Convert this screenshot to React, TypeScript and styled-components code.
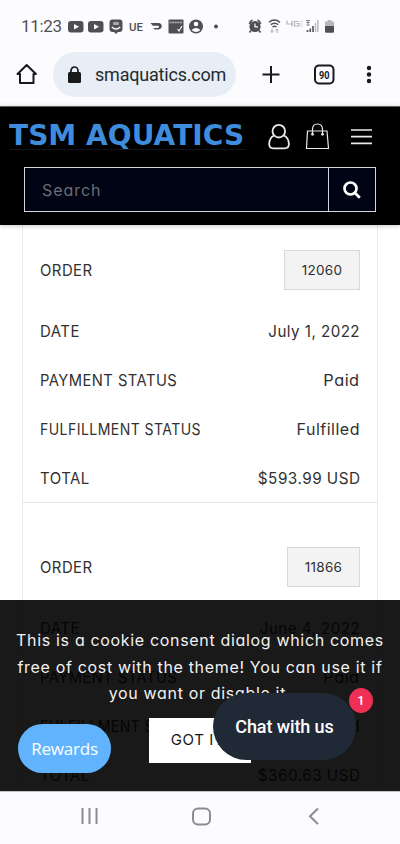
import React from 'react';
import styled, { createGlobalStyle } from 'styled-components';

const Global = createGlobalStyle`
  * { box-sizing: border-box; }
  body { margin: 0; background: #fff; }
  button { font: inherit; padding: 0; border: 0; background: none; }
`;

const Screen = styled.div`
  width: 400px;
  height: 844px;
  display: flex;
  flex-direction: column;
  overflow: hidden;
  background: #fff;
  color: #303030;
  font-family: Inter, 'Open Sans', sans-serif;
  font-feature-settings: 'cv11' 1, 'calt' 0;
`;

const StatusBar = styled.div`
  height: 48px;
  flex: none;
  display: flex;
  background: #fcfcff;
  svg { display: block; }
`;

const Clock = styled.span`
  width: 46px;
  margin: 16px 0 0 21px;
  font: 17px/20px Roboto, sans-serif;
  letter-spacing: -0.35px;
  color: #505053;
  white-space: nowrap;
`;

const BrowserBar = styled.div`
  height: 58px;
  flex: none;
  display: flex;
  align-items: flex-start;
  background: #fcfcff;
`;

const HomeButton = styled.button`
  width: 24px;
  height: 24px;
  margin: 14px 0 0 15px;
`;

const AddressPill = styled.div`
  width: 183px;
  height: 45px;
  margin: 4px 0 0 14px;
  padding-left: 15px;
  display: flex;
  align-items: center;
  gap: 14px;
  border-radius: 23px;
  background: #e7eef5;
  color: #242a30;
  font: 18px/22px Roboto, sans-serif;
  letter-spacing: -0.2px;
`;

const BrowserActions = styled.div`
  margin: 9px 0 0 19px;
`;

const Header = styled.header`
  height: 119px;
  flex: none;
  background: #000;
  position: relative;
  z-index: 1;
  border-top: 1px solid #5c5e60;
  box-shadow: 0 1px 5px rgba(0, 0, 0, 0.22);
`;

const Brand = styled.div`
  height: 60px;
  padding-left: 9px;
  display: flex;
  svg { flex: none; }
`;

const Logo = styled.div`
  width: 237px;
  height: 33px;
  margin: 10px 20px 0 0;
  border-bottom: 1px solid #141414;
`;

const Wordmark = styled.span`
  display: inline-block;
  font: bold 28.8px/37px 'DejaVu Sans', sans-serif;
  color: #3f8cdd;
  white-space: nowrap;
  transform: scaleX(0.975);
  transform-origin: left;
`;

const SearchBox = styled.div`
  width: 352px;
  height: 45px;
  margin-left: 24px;
  display: flex;
  border: 1px solid #d5d6da;
  background: #000313;
`;

const SearchInput = styled.div`
  flex: 1;
  padding-left: 17px;
  font-size: 16px;
  line-height: 44px;
  letter-spacing: 0.95px;
  color: #6c6c72;
`;

const SearchButton = styled.button`
  width: 47px;
  && { border-left: 1px solid #d5d6da; }
  display: flex;
  align-items: center;
  justify-content: center;
`;

const Content = styled.main`
  position: relative;
  flex: 1;
  overflow: hidden;
`;

const Orders = styled.div`
  width: 356px;
  height: 600px;
  margin-left: 22px;
  border: solid #ebebeb;
  border-width: 0 1px;
`;

const Card = styled.section<{ $top: number }>`
  padding: ${(p) => p.$top}px 17px 0;
  border-bottom: 1px solid #e6e6e6;
`;

const Row = styled.div<{ $first?: boolean }>`
  height: ${(p) => (p.$first ? 40 : 48.75)}px;
  margin-bottom: ${(p) => (p.$first ? 17 : 0)}px;
  display: flex;
  align-items: center;
  justify-content: space-between;
  font-size: 16px;
  line-height: 24px;
  letter-spacing: 0.5px;
`;

const Label = styled.span<{ $scale: number }>`
  transform: scaleX(${(p) => p.$scale});
  transform-origin: left;
`;

const Value = styled.span<{ $scale: number }>`
  transform: scaleX(${(p) => p.$scale});
  transform-origin: right;
`;

const OrderLink = styled.button<{ $width: number }>`
  && {
    width: ${(p) => p.$width}px;
    height: 40px;
    border: 1px solid #d9d9d9;
    background: #f3f3f3;
    color: #303030;
    font-size: 13.5px;
    letter-spacing: 0.3px;
  }
`;

const Consent = styled.div`
  position: absolute;
  left: 0;
  right: 0;
  bottom: 0;
  height: 191px;
  padding-top: 27px;
  display: flex;
  flex-direction: column;
  align-items: center;
  background: rgba(0, 0, 0, 0.9);
  color: #f2f2f2;
  font-size: 16px;
  line-height: 26.7px;
  letter-spacing: 0.67px;
  white-space: nowrap;
`;

const GotIt = styled.button`
  && {
    width: 102px;
    height: 45px;
    margin-top: 11px;
    background: #fff;
    color: #161616;
    font-size: 15px;
    letter-spacing: 0.6px;
  }
`;

const Rewards = styled.button`
  && {
    position: absolute;
    left: 18px;
    bottom: 18px;
    width: 93px;
    height: 49px;
    border-radius: 25px;
    background: #62b3fd;
    color: #fff;
    font: 17px/49px 'Open Sans', sans-serif;
    letter-spacing: -0.2px;
  }
`;

const Chat = styled.button`
  && {
    position: absolute;
    left: 213px;
    bottom: 31px;
    width: 143px;
    height: 67px;
    border-radius: 34px;
    background: #202a36;
    color: #fff;
    font: 500 18px/67px Roboto, sans-serif;
    letter-spacing: -0.1px;
  }
`;

const Badge = styled.span`
  position: absolute;
  left: 349px;
  bottom: 78px;
  width: 24px;
  height: 25px;
  border-radius: 50%;
  background: #ef2f55;
  color: #fff;
  font: 500 13px/25px Roboto, sans-serif;
  text-align: center;
`;

const NavBar = styled.nav`
  height: 53px;
  flex: none;
  display: flex;
  justify-content: center;
  background: #fcfcff;
  border-top: 1px solid #c5c5c8;
`;

const StatusIcons = () => (
  <svg width="333" height="48" viewBox="67 0 333 48" fill="#505053">
    <rect x="68" y="21" width="15.5" height="11.5" rx="3" />
    <path d="M74 24l5 2.700-5 2.700z" fill="#fcfcff" />
    <rect x="88" y="21" width="15.5" height="11.500" rx="3" />
    <path d="M94 24l5 2.700-5 2.700z" fill="#fcfcff" />
    <path d="M112.500 19.500h7q3 0 3 3v6.500q0 3-3 3h-1.500l-2 2-2-2h-1.500q-3 0-3-3v-6.500q0-3 3-3z" />
    <path d="M111.800 27q4.200 4 8.400 0" stroke="#fcfcff" strokeWidth="1.200" fill="none" />
    <rect x="113" y="22" width="6" height="3" rx="1" fill="#a9a9ac" />
    <text x="129" y="30.500" fontSize="11" fontFamily="Roboto" fontWeight="500" textLength="14" lengthAdjust="spacingAndGlyphs">UE</text>
    <path d="M150.500 23h8q3.300.3 3.300 3.500-.5 3-4 3h-3l-1.700-1.500h4.400q1.500 0 1.500-1.200 0-1-1.200-1h-5z" />
    <rect x="168.500" y="19.500" width="15" height="14" rx="1" />
    <path d="M169.500 22.500h13" stroke="#b5b5b8" strokeWidth="1.500" strokeDasharray="2 .6" />
    <path d="M177.500 29l1.500 2 3-5" stroke="#fff" strokeWidth="1.100" fill="none" />
    <circle cx="196" cy="26.500" r="7" />
    <circle cx="196" cy="24" r="2.300" fill="#fcfcff" />
    <path d="M191.500 30q4.500-4 9 0-4.500 4-9 0z" fill="#fcfcff" />
    <circle cx="216" cy="26.500" r="2" />
    <circle cx="255" cy="26.500" r="5.600" />
    <path d="M249.500 24q.5-3 3-4M260.500 24q-.5-3-3-4M251 30.500l-1.500 2M259 30.500l1.500 2" stroke="#505053" strokeWidth="1.700" fill="none" />
    <path d="M255 23.500v3.300h3" stroke="#fcfcff" strokeWidth="1.200" fill="none" />
    <path d="M269 22.300q5.300-4.500 11 0M270.800 24.700q3.800-3 7.400 0M272.500 27q2-1.500 4 0" stroke="#505053" strokeWidth="1.500" fill="none" />
    <path d="M272 28.500v4m-1.500-1.500l1.500 1.500 1.500-1.500M277 33v-4m-1.500 1.500L277 29l1.500 1.500" stroke="#aaa" strokeWidth="1" fill="none" />
    <path d="M287 20.500v3.500h6M292 20.500v6M299 21.500h-4.500v4.500h4.500v-2.500h-2.500" stroke="#b5b5b8" strokeWidth="1.200" fill="none" />
    <path d="M300.500 21.500h2M300.500 24h2M300.500 26h2" stroke="#c8c8ca" />
    <path d="M306 20.500h4M306.500 22.500h3M306.500 25h3M308 20v5" stroke="#808083" />
    <path d="M307.500 32v-2M310.300 32v-3.500M313 32v-6" stroke="#505053" strokeWidth="1.600" />
    <path d="M315.500 32V23M317.800 32V20" stroke="#bcbcbf" strokeWidth="1.500" />
    <path d="M325 26v-4.500h2.500V20h4v1.500h2.500V26z" fill="#b9b9bc" />
    <path d="M325 26h9v5.500q0 1.200-1.200 1.200h-6.600q-1.200 0-1.200-1.200z" />
  </svg>
);

type Field = { label: string; scale: number; value: string; valueScale: number };
type Order = { id: string; box: number; top: number; fields: Field[] };

const fields = (date: string, total: string): Field[] => [
  { label: 'DATE', scale: 0.935, value: date, valueScale: 0.945 },
  { label: 'PAYMENT STATUS', scale: 0.92, value: 'Paid', valueScale: 1.02 },
  { label: 'FULFILLMENT STATUS', scale: 0.877, value: 'Fulfilled', valueScale: 1 },
  { label: 'TOTAL', scale: 0.935, value: total, valueScale: 0.955 },
];

const orders: Order[] = [
  { id: '12060', box: 76, top: 25, fields: fields('July 1, 2022', '$593.99 USD') },
  { id: '11866', box: 73, top: 44, fields: fields('June 4, 2022', '$360.63 USD') },
];

export default function App() {
  return (
    <Screen>
      <Global />
      <StatusBar><Clock>11:23</Clock><StatusIcons /></StatusBar>
      <BrowserBar>
        <HomeButton aria-label="Home">
          <svg width="24" height="24" viewBox="0 0 24 24" fill="none" stroke="#17191b" strokeWidth="2">
            <path d="M2.500 12L11.700 3l9.200 9H18.500V21H5V12z" strokeLinejoin="round" />
          </svg>
        </HomeButton>
        <AddressPill>
          <svg width="13" height="18" viewBox="0 0 13 18">
            <rect y="6" width="13" height="11" rx="1.500" fill="#17191b" />
            <path d="M3 7V4.500a3.500 3.500 0 017 0V7" fill="none" stroke="#17191b" strokeWidth="1.700" />
          </svg>
          smaquatics.com
        </AddressPill>
        <BrowserActions>
          <svg width="130" height="36" viewBox="0 0 130 36" fill="none" stroke="#17191b" strokeWidth="2">
            <path d="M7.500 17.500h17M16 9v17" />
            <rect x="60" y="8.500" width="18.500" height="18" rx="4" />
            <text x="64" y="21.500" fontSize="10.500" fontWeight="700" fontFamily="Roboto" fill="#17191b" stroke="none" textLength="10.500" lengthAdjust="spacingAndGlyphs">90</text>
            <g fill="#17191b" stroke="none"><circle cx="114" cy="11" r="2.200" /><circle cx="114" cy="17.500" r="2.200" /><circle cx="114" cy="24" r="2.200" /></g>
          </svg>
        </BrowserActions>
      </BrowserBar>
      <Header>
        <Brand>
          <Logo><Wordmark>TSM AQUATICS</Wordmark></Logo>
          <svg width="110" height="60" viewBox="266 107 110 60" fill="none" stroke="#e9e9e9">
            <circle cx="278.800" cy="131.200" r="6.300" strokeWidth="1.800" />
            <path d="M274 135.500q-4.800 2.500-4.800 8.500 0 4.300 4 4.300h11.500q4.200 0 4.200-4.300 0-6-5-8.500" strokeWidth="1.800" />
            <path d="M307.500 131h19.500l1.500 17.500h-22z" strokeWidth="1.200" />
            <path d="M312.500 134v-4.500q0-5.500 5-5.500t5 5.500v4.500" strokeWidth="1.200" />
            <circle cx="312.500" cy="134.200" r="1.200" fill="#ddd" strokeWidth=".5" /><circle cx="322.500" cy="134.200" r="1.200" fill="#ddd" strokeWidth=".5" />
            <path d="M351 130h21M351 136.700h21M351 143.400h21" strokeWidth="1.700" />
          </svg>
        </Brand>
        <SearchBox>
          <SearchInput>Search</SearchInput>
          <SearchButton aria-label="Search">
            <svg width="18" height="18" viewBox="0 0 18 18" fill="none" stroke="#fff" strokeWidth="2.700">
              <circle cx="7.500" cy="7.500" r="6" /><path d="M12 12l4.800 4.800" />
            </svg>
          </SearchButton>
        </SearchBox>
      </Header>
      <Content>
        <Orders>
          {orders.map((order) => (
            <Card key={order.id} $top={order.top}>
              <Row $first><Label $scale={0.93}>ORDER</Label><OrderLink $width={order.box}>{order.id}</OrderLink></Row>
              {order.fields.map((f) => (
                <Row key={f.label}><Label $scale={f.scale}>{f.label}</Label><Value $scale={f.valueScale}>{f.value}</Value></Row>
              ))}
            </Card>
          ))}
        </Orders>
        <Consent>
          <div>This is a cookie consent dialog which comes</div>
          <div>free of cost with the theme! You can use it if</div>
          <div>you want or disable it.</div>
          <GotIt>GOT IT!</GotIt>
        </Consent>
        <Rewards>Rewards</Rewards>
        <Chat>Chat with us</Chat>
        <Badge>1</Badge>
      </Content>
      <NavBar>
        <svg width="400" height="52" viewBox="0 792 400 52" fill="none" stroke="#8b8b8e" strokeWidth="2">
          <path d="M82.500 808v16M89.500 808v16M96.500 808v16" />
          <rect x="193" y="808.500" width="17" height="16" rx="5" />
          <path d="M318 808.500l-8 7.800 8 7.800" />
        </svg>
      </NavBar>
    </Screen>
  );
}
